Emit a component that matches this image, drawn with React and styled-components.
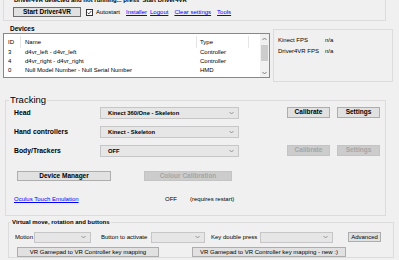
import styled, { createGlobalStyle } from "styled-components";

const GlobalStyle = createGlobalStyle`
  * {
    box-sizing: border-box;
  }
  body {
    margin: 0;
    background: #f0f0f0;
    font-family: "Liberation Sans", Arial, sans-serif;
    color: #000;
  }
`;

const Window = styled.div`
  width: 399px;
  height: 260px;
  overflow: hidden;
  background: #f0f0f0;
  display: flex;
  flex-direction: column;
  font-size: 6px;
  line-height: 8px;
`;

const TopPanel = styled.div`
  flex-shrink: 0;
  margin: -10px 0 0 3px;
  width: 383px;
  height: 31px;
  padding-left: 9px;
  border: 1px solid #dcdcdc;
  border-top: none;
`;

const Status = styled.div`
  margin-top: 6px;
  padding-left: 1px;
  height: 8px;
  font-weight: bold;
  white-space: nowrap;
`;

const ToolRow = styled.div`
  display: flex;
  align-items: center;
  height: 10px;
  margin-top: 3px;
`;

const Button = styled.button`
  flex-shrink: 0;
  width: ${(p) => p.$w}px;
  height: ${(p) => p.$h || 10}px;
  margin-left: ${(p) => p.$ml || 0}px;
  padding: 0;
  font-family: inherit;
  font-size: ${(p) => (p.$bold ? 6.5 : 6)}px;
  font-weight: ${(p) => (p.$bold ? "bold" : "normal")};
  line-height: 1;
  white-space: nowrap;
  color: #000;
  background: #e1e1e1;
  border: 1px solid ${(p) => (p.$primary ? "#6e6e6e" : "#adadad")};
  &:disabled {
    color: #a6a6a6;
    background: #cccccc;
    border-color: #c4c4c4;
  }
`;

const CheckBox = styled.span`
  display: flex;
  align-items: center;
  justify-content: center;
  width: 7px;
  height: 7px;
  margin-left: 5px;
  background: #fff;
  border: 1px solid #333;
`;

const Text = styled.span`
  flex-shrink: 0;
  margin-left: ${(p) => p.$ml || 0}px;
  width: ${(p) => (p.$w ? `${p.$w}px` : "auto")};
  font-weight: ${(p) => (p.$bold ? "bold" : "normal")};
  white-space: nowrap;
`;

const Link = styled.a`
  flex-shrink: 0;
  margin-left: ${(p) => p.$ml || 0}px;
  color: #0000ff;
  text-decoration: underline;
  white-space: nowrap;
  cursor: pointer;
`;

const DevicesArea = styled.div`
  flex-shrink: 0;
  display: flex;
  margin: 3px 0 0 3px;
`;

const DevicesColumn = styled.div`
  width: 267px;
  display: flex;
  flex-direction: column;
`;

const SectionTitle = styled.div`
  height: 9px;
  line-height: 9px;
  padding-left: 7px;
  font-size: 6.5px;
  font-weight: bold;
`;

const ListView = styled.div`
  display: flex;
  height: 45px;
  background: #fff;
  border: 1px solid #828790;
`;

const ListBody = styled.div`
  flex: 1;
  display: flex;
  flex-direction: column;
`;

const HeaderRow = styled.div`
  display: grid;
  grid-template-columns: 17px 176px 52px;
  height: 14px;
  padding-top: 2px;
`;

const HeaderCell = styled.div`
  padding-left: ${(p) => p.$pad}px;
  line-height: 12px;
  border-right: 1px solid #e5e5e5;
`;

const ItemRow = styled.div`
  display: grid;
  grid-template-columns: 17px 176px 52px;
  height: 9px;
  line-height: 9px;
`;

const Cell = styled.div`
  padding-left: ${(p) => p.$pad}px;
  white-space: nowrap;
  overflow: hidden;
`;

const ScrollBar = styled.div`
  width: 9px;
  display: flex;
  flex-direction: column;
  align-items: center;
  background: #f0f0f0;
`;

const ScrollArrow = styled.div`
  display: flex;
  align-items: center;
  justify-content: center;
  height: 9px;
`;

const ScrollTrack = styled.div`
  flex: 1;
`;

const Thumb = styled.div`
  width: 7px;
  height: 16px;
  margin-top: 2px;
  background: #cdcdcd;
`;

const FpsPanel = styled.div`
  display: flex;
  flex-direction: column;
  gap: 3px;
  width: 120px;
  height: 53px;
  margin: 5px 0 0 3px;
  padding: 6px 0 0 4px;
  border: 1px solid #dcdcdc;
`;

const FpsRow = styled.div`
  display: flex;
  height: 8px;
`;

const Group = styled.fieldset`
  flex-shrink: 0;
  min-width: 0;
  width: ${(p) => p.$w}px;
  margin: ${(p) => p.$margin};
  padding: ${(p) => p.$padding};
  border: 1px solid #dcdcdc;
`;

const Legend = styled.legend`
  margin-left: ${(p) => p.$indent}px;
  padding: 0 1px;
  font-size: ${(p) => p.$size}px;
  font-weight: ${(p) => (p.$bold ? "bold" : "normal")};
  line-height: ${(p) => p.$lh}px;
`;

const TrackRow = styled.div`
  display: flex;
  align-items: flex-start;
  height: 12px;
  margin-top: ${(p) => p.$mt}px;
  padding-left: 8px;
`;

const TrackLabel = styled.div`
  width: 86px;
  line-height: 12px;
  font-size: 6.8px;
  font-weight: bold;
  white-space: nowrap;
`;

const Combo = styled.div`
  flex-shrink: 0;
  display: flex;
  align-items: center;
  justify-content: space-between;
  width: ${(p) => p.$w}px;
  height: ${(p) => p.$h || 12}px;
  margin-left: ${(p) => p.$ml || 0}px;
  padding: 0 4px 0 7px;
  font-size: 5.8px;
  font-weight: bold;
  white-space: nowrap;
  background: #e6e6e6;
  border: 1px solid #c6c6c6;
`;

const ButtonPair = styled.div`
  display: flex;
  gap: 7px;
  margin-left: 48px;
`;

const ActionRow = styled.div`
  display: flex;
  align-items: center;
  height: 10px;
  margin-top: ${(p) => p.$mt}px;
  padding-left: ${(p) => p.$pl}px;
`;

const OptionRow = styled.div`
  display: grid;
  grid-template-columns: 151px 25px auto;
  height: 8px;
  margin-top: 14px;
  padding-left: 8px;
`;

const devices = [
  { id: 3, name: "d4vr_left - d4vr_left", type: "Controller" },
  { id: 4, name: "d4vr_right - d4vr_right", type: "Controller" },
  { id: 0, name: "Null Model Number - Null Serial Number", type: "HMD" },
];

const tracking = [
  { label: "Head", value: "Kinect 360/One - Skeleton", buttons: true, mt: 2 },
  { label: "Hand controllers", value: "Kinect - Skeleton", mt: 7 },
  { label: "Body/Trackers", value: "OFF", buttons: true, disabled: true, mt: 7 },
];

function Chevron({ up, down }) {
  const d = up ? "M0.5 3 L2.5 1 L4.5 3" : "M0.5 1 L2.5 3 L4.5 1";
  return (
    <svg width="5" height="4" viewBox="0 0 5 4">
      <path d={d} fill="none" stroke={down || up ? "#606060" : "#808080"} strokeWidth="0.8" />
    </svg>
  );
}

function Select({ w, h, ml, value }) {
  return (
    <Combo $w={w} $h={h} $ml={ml}>
      <span>{value}</span>
      <Chevron />
    </Combo>
  );
}

export default function App() {
  return (
    <>
      <GlobalStyle />
      <Window>
        <TopPanel>
          <Status>Driver4VR detected and not running... press 'Start Driver4VR'</Status>
          <ToolRow>
            <Button $w={68} $bold $primary>
              Start Driver4VR
            </Button>
            <CheckBox>
              <svg width="5" height="5" viewBox="0 0 5 5">
                <path d="M0.6 2.6 L1.9 3.9 L4.4 0.9" fill="none" stroke="#222" strokeWidth="0.8" />
              </svg>
            </CheckBox>
            <Text $ml={3}>Autostart</Text>
            <Link $ml={6}>Installer</Link>
            <Link $ml={3}>Logout</Link>
            <Link $ml={6}>Clear settings</Link>
            <Link $ml={6}>Tools</Link>
          </ToolRow>
        </TopPanel>

        <DevicesArea>
          <DevicesColumn>
            <SectionTitle>Devices</SectionTitle>
            <ListView>
              <ListBody>
                <HeaderRow>
                  <HeaderCell $pad={4}>ID</HeaderCell>
                  <HeaderCell $pad={4}>Name</HeaderCell>
                  <HeaderCell $pad={3}>Type</HeaderCell>
                </HeaderRow>
                {devices.map((d) => (
                  <ItemRow key={d.name}>
                    <Cell $pad={4}>{d.id}</Cell>
                    <Cell $pad={4}>{d.name}</Cell>
                    <Cell $pad={3}>{d.type}</Cell>
                  </ItemRow>
                ))}
              </ListBody>
              <ScrollBar>
                <ScrollArrow>
                  <Chevron up />
                </ScrollArrow>
                <ScrollTrack>
                  <Thumb />
                </ScrollTrack>
                <ScrollArrow>
                  <Chevron down />
                </ScrollArrow>
              </ScrollBar>
            </ListView>
          </DevicesColumn>
          <FpsPanel>
            <FpsRow>
              <Text $w={47}>Kinect FPS</Text>
              <Text>n/a</Text>
            </FpsRow>
            <FpsRow>
              <Text $w={47}>Driver4VR FPS</Text>
              <Text>n/a</Text>
            </FpsRow>
          </FpsPanel>
        </DevicesArea>

        <Group $w={381} $margin="13px 0 0 5px" $padding="0 0 12px 0">
          <Legend $indent={3} $size={9.5} $lh={10}>
            Tracking
          </Legend>
          {tracking.map((row) => (
            <TrackRow key={row.label} $mt={row.mt}>
              <TrackLabel>{row.label}</TrackLabel>
              <Select w={139} value={row.value} />
              {row.buttons && (
                <ButtonPair>
                  <Button $w={43} $h={11} $bold disabled={row.disabled}>
                    Calibrate
                  </Button>
                  <Button $w={43} $h={11} $bold disabled={row.disabled}>
                    Settings
                  </Button>
                </ButtonPair>
              )}
            </TrackRow>
          ))}
          <ActionRow $mt={14} $pl={11}>
            <Button $w={94} $bold>
              Device Manager
            </Button>
            <Button $w={88} $ml={33} $bold disabled>
              Colour Calibration
            </Button>
          </ActionRow>
          <OptionRow>
            <Link>Oculus Touch Emulation</Link>
            <Text>OFF</Text>
            <Text>(requires restart)</Text>
          </OptionRow>
        </Group>

        <Group $w={386} $margin="2px 0 0 8px" $padding="6px 0 0 0">
          <Legend $indent={2} $size={6} $lh={8} $bold>
            Virtual move, rotation and buttons
          </Legend>
          <ActionRow $mt={0} $pl={6}>
            <Text $w={19}>Motion</Text>
            <Select w={57} h={11} value="" />
            <Text $ml={10} $w={50}>
              Button to activate
            </Text>
            <Select w={54} h={11} value="" />
            <Text $ml={6} $w={49}>
              Key double press
            </Text>
            <Select w={73} h={11} value="" />
            <Button $w={33} $ml={15}>
              Advanced
            </Button>
          </ActionRow>
          <ActionRow $mt={5} $pl={8}>
            <Button $w={142}>VR Gamepad to VR Controller key mapping</Button>
            <Button $w={154} $ml={33}>
              VR Gamepad to VR Controller key mapping - new :)
            </Button>
          </ActionRow>
        </Group>
      </Window>
    </>
  );
}
